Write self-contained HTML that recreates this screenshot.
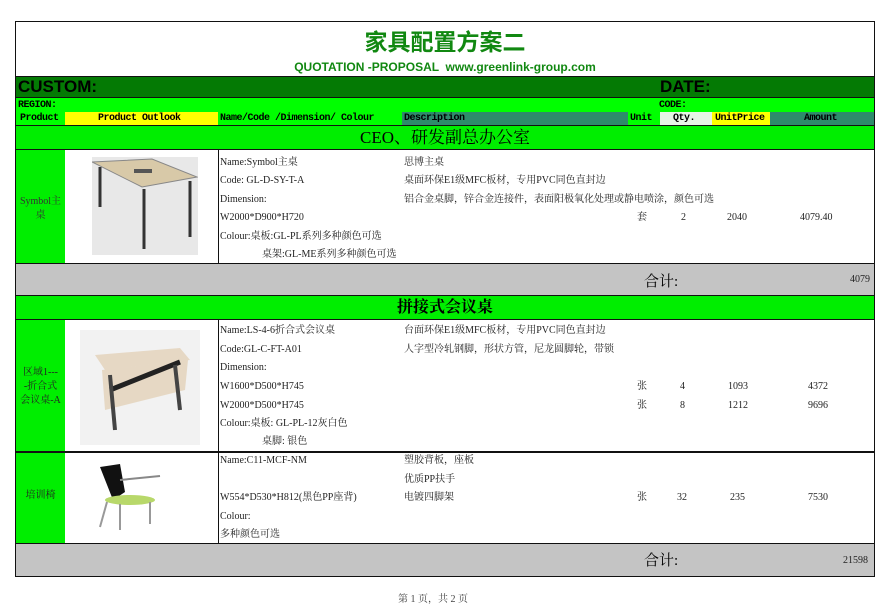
<!DOCTYPE html>
<html><head><meta charset="utf-8"><style>
body{margin:0;width:893px;height:600px;background:#fff;position:relative;overflow:hidden;font-family:"Liberation Serif","Noto Serif CJK SC",serif;}
div{position:absolute;box-sizing:border-box;}
.t{font-size:10px;color:#222;white-space:nowrap;line-height:12px;}
.h{font-size:10px;font-weight:bold;font-family:"Liberation Mono","Noto Sans CJK SC",monospace;line-height:12px;white-space:nowrap;letter-spacing:-0.5px}
</style></head><body>
<div style="left:15px;top:21px;width:860px;height:556px;border:1.5px solid #111;"></div>
<div style="left:16px;top:22px;width:858px;height:54px;text-align:center;">
<div style="left:0;right:0;top:1px;font:bold 23px 'Noto Sans CJK SC',sans-serif;color:#118811;">家具配置方案二</div>
<div style="left:0;right:0;top:38px;font:bold 12px 'Liberation Sans',sans-serif;color:#118811;">QUOTATION -PROPOSAL &nbsp;www.greenlink-group.com</div>
</div>
<div style="left:16px;top:76px;width:858px;height:21px;background:#047a04;border-top:1px solid #111;"></div>
<div style="left:18px;top:77px;font:bold 17px 'Liberation Sans',sans-serif;color:#000;">CUSTOM:</div>
<div style="left:660px;top:77px;font:bold 17px 'Liberation Sans',sans-serif;color:#000;">DATE:</div>
<div style="left:16px;top:97px;width:858px;height:29px;background:#00ff00;border-top:1px solid #111;"></div>
<div class="h" style="left:18px;top:100px;">REGION:</div>
<div class="h" style="left:659px;top:100px;">CODE:</div>
<div style="left:65px;top:112px;width:153px;height:13px;background:#ffff00;"></div>
<div style="left:402px;top:112px;width:226px;height:13px;background:#2e8b6b;"></div>
<div style="left:660px;top:112px;width:52px;height:13px;background:#e6f5e6;"></div>
<div style="left:712px;top:112px;width:58px;height:13px;background:#ffff00;"></div>
<div style="left:770px;top:112px;width:104px;height:13px;background:#2e8b6b;"></div>
<div class="h" style="left:20px;top:113px;">Product</div>
<div class="h" style="left:98px;top:113px;">Product Outlook</div>
<div class="h" style="left:220px;top:113px;">Name/Code /Dimension/ Colour</div>
<div class="h" style="left:404px;top:113px;">Description</div>
<div class="h" style="left:630px;top:113px;">Unit</div>
<div class="h" style="left:673px;top:113px;">Qty.</div>
<div class="h" style="left:715px;top:113px;">UnitPrice</div>
<div class="h" style="left:804px;top:113px;">Amount</div>
<!-- section 1 -->
<div style="left:16px;top:125px;width:858px;height:25px;background:#00ee00;border-top:1px solid #111;border-bottom:1px solid #111;text-align:center;font-size:17px;line-height:24px;">CEO、研发副总办公室</div>
<div style="left:16px;top:150px;width:49px;height:113px;background:#00ee00;"></div>
<div class="t" style="left:16px;top:195px;width:49px;text-align:center;line-height:14px;color:#333;">Symbol主<br>桌</div>
<div style="left:218px;top:150px;width:1px;height:113px;background:#111;"></div>
<svg style="position:absolute;left:92px;top:157px" width="106" height="98"><rect width="106" height="98" fill="#e8e8e8"/><polygon points="0,5 60,2 105,20 50,30" fill="#d8c9a8" stroke="#888"/><rect x="42" y="12" width="18" height="4" fill="#555"/><line x1="8" y1="10" x2="8" y2="50" stroke="#333" stroke-width="3"/><line x1="52" y1="32" x2="52" y2="92" stroke="#333" stroke-width="3"/><line x1="98" y1="24" x2="98" y2="80" stroke="#333" stroke-width="3"/></svg>
<div class="t" style="left:220px;top:157px;">Name:Symbol主桌</div>
<div class="t" style="left:220px;top:175px;">Code: GL-D-SY-T-A</div>
<div class="t" style="left:220px;top:194px;">Dimension:</div>
<div class="t" style="left:220px;top:212px;">W2000*D900*H720</div>
<div class="t" style="left:220px;top:231px;">Colour:桌板:GL-PL系列多种颜色可选</div>
<div class="t" style="left:262px;top:249px;">桌架:GL-ME系列多种颜色可选</div>
<div class="t" style="left:404px;top:157px;">思博主桌</div>
<div class="t" style="left:404px;top:175px;">桌面环保E1级MFC板材，专用PVC同色直封边</div>
<div class="t" style="left:404px;top:194px;">铝合金桌脚，锌合金连接件，表面阳极氧化处理或静电喷涂，颜色可选</div>
<div class="t" style="left:637px;top:212px;">套</div>
<div class="t" style="left:681px;top:212px;">2</div>
<div class="t" style="left:727px;top:212px;">2040</div>
<div class="t" style="left:800px;top:212px;">4079.40</div>
<div style="left:16px;top:263px;width:858px;height:33px;background:#c4c4c4;border-top:1.5px solid #111;border-bottom:1.5px solid #111;"></div>
<div style="left:644px;top:270px;font-size:15px;">合计:</div>
<div class="t" style="left:850px;top:274px;">4079</div>
<!-- section 2 -->
<div style="left:16px;top:296px;width:858px;height:24px;background:#00ee00;border-bottom:1px solid #111;text-align:center;font-size:16px;font-weight:bold;line-height:24px;">拼接式会议桌</div>
<div style="left:16px;top:320px;width:49px;height:223px;background:#00ee00;"></div>
<div style="left:16px;top:451px;width:858px;height:1.5px;background:#111;"></div>
<div style="left:218px;top:320px;width:1px;height:223px;background:#111;"></div>
<div class="t" style="left:16px;top:366px;width:49px;text-align:center;line-height:14px;">区域1---<br>-折合式<br>会议桌-A</div>
<div class="t" style="left:16px;top:490px;width:49px;text-align:center;">培训椅</div>
<svg style="position:absolute;left:80px;top:330px" width="120" height="115"><rect width="120" height="115" fill="#f2f2f2"/><polygon points="15,25 100,18 110,30 25,40" fill="#e6d8c4"/><polygon points="22,40 108,30 105,60 25,80" fill="#e6d8c4"/><line x1="30" y1="60" x2="100" y2="32" stroke="#222" stroke-width="5"/><line x1="30" y1="45" x2="35" y2="100" stroke="#444" stroke-width="4"/><line x1="95" y1="35" x2="100" y2="80" stroke="#444" stroke-width="4"/></svg>
<svg style="position:absolute;left:95px;top:462px" width="75" height="70"><polygon points="5,5 25,2 30,30 18,38" fill="#111"/><ellipse cx="35" cy="38" rx="25" ry="5" fill="#b8d86a"/><line x1="12" y1="40" x2="5" y2="65" stroke="#999" stroke-width="2"/><line x1="55" y1="40" x2="55" y2="62" stroke="#999" stroke-width="2"/><line x1="25" y1="42" x2="25" y2="68" stroke="#999" stroke-width="2"/><line x1="25" y1="18" x2="65" y2="14" stroke="#888" stroke-width="2"/></svg>
<div class="t" style="left:220px;top:325px;">Name:LS-4-6折合式会议桌</div>
<div class="t" style="left:220px;top:344px;">Code:GL-C-FT-A01</div>
<div class="t" style="left:220px;top:362px;">Dimension:</div>
<div class="t" style="left:220px;top:381px;">W1600*D500*H745</div>
<div class="t" style="left:220px;top:400px;">W2000*D500*H745</div>
<div class="t" style="left:220px;top:418px;">Colour:桌板: GL-PL-12灰白色</div>
<div class="t" style="left:262px;top:436px;">桌脚: 银色</div>
<div class="t" style="left:404px;top:325px;">台面环保E1级MFC板材，专用PVC同色直封边</div>
<div class="t" style="left:404px;top:344px;">人字型冷轧钢脚，形状方管，尼龙圆脚轮，带锁</div>
<div class="t" style="left:637px;top:381px;">张</div><div class="t" style="left:680px;top:381px;">4</div><div class="t" style="left:728px;top:381px;">1093</div><div class="t" style="left:808px;top:381px;">4372</div>
<div class="t" style="left:637px;top:400px;">张</div><div class="t" style="left:680px;top:400px;">8</div><div class="t" style="left:728px;top:400px;">1212</div><div class="t" style="left:808px;top:400px;">9696</div>
<div class="t" style="left:220px;top:455px;">Name:C11-MCF-NM</div>
<div class="t" style="left:220px;top:492px;">W554*D530*H812(黑色PP座背)</div>
<div class="t" style="left:220px;top:511px;">Colour:</div>
<div class="t" style="left:220px;top:529px;">多种颜色可选</div>
<div class="t" style="left:404px;top:455px;">塑胶背板，座板</div>
<div class="t" style="left:404px;top:474px;">优质PP扶手</div>
<div class="t" style="left:404px;top:492px;">电镀四脚架</div>
<div class="t" style="left:637px;top:492px;">张</div><div class="t" style="left:677px;top:492px;">32</div><div class="t" style="left:730px;top:492px;">235</div><div class="t" style="left:808px;top:492px;">7530</div>
<div style="left:16px;top:543px;width:858px;height:34px;background:#c4c4c4;border-top:1.5px solid #111;border-bottom:1.5px solid #111;"></div>
<div style="left:644px;top:549px;font-size:15px;">合计:</div>
<div class="t" style="left:843px;top:555px;">21598</div>
<div class="t" style="left:398px;top:594px;color:#444;">第 1 页，共 2 页</div>
</body></html>
